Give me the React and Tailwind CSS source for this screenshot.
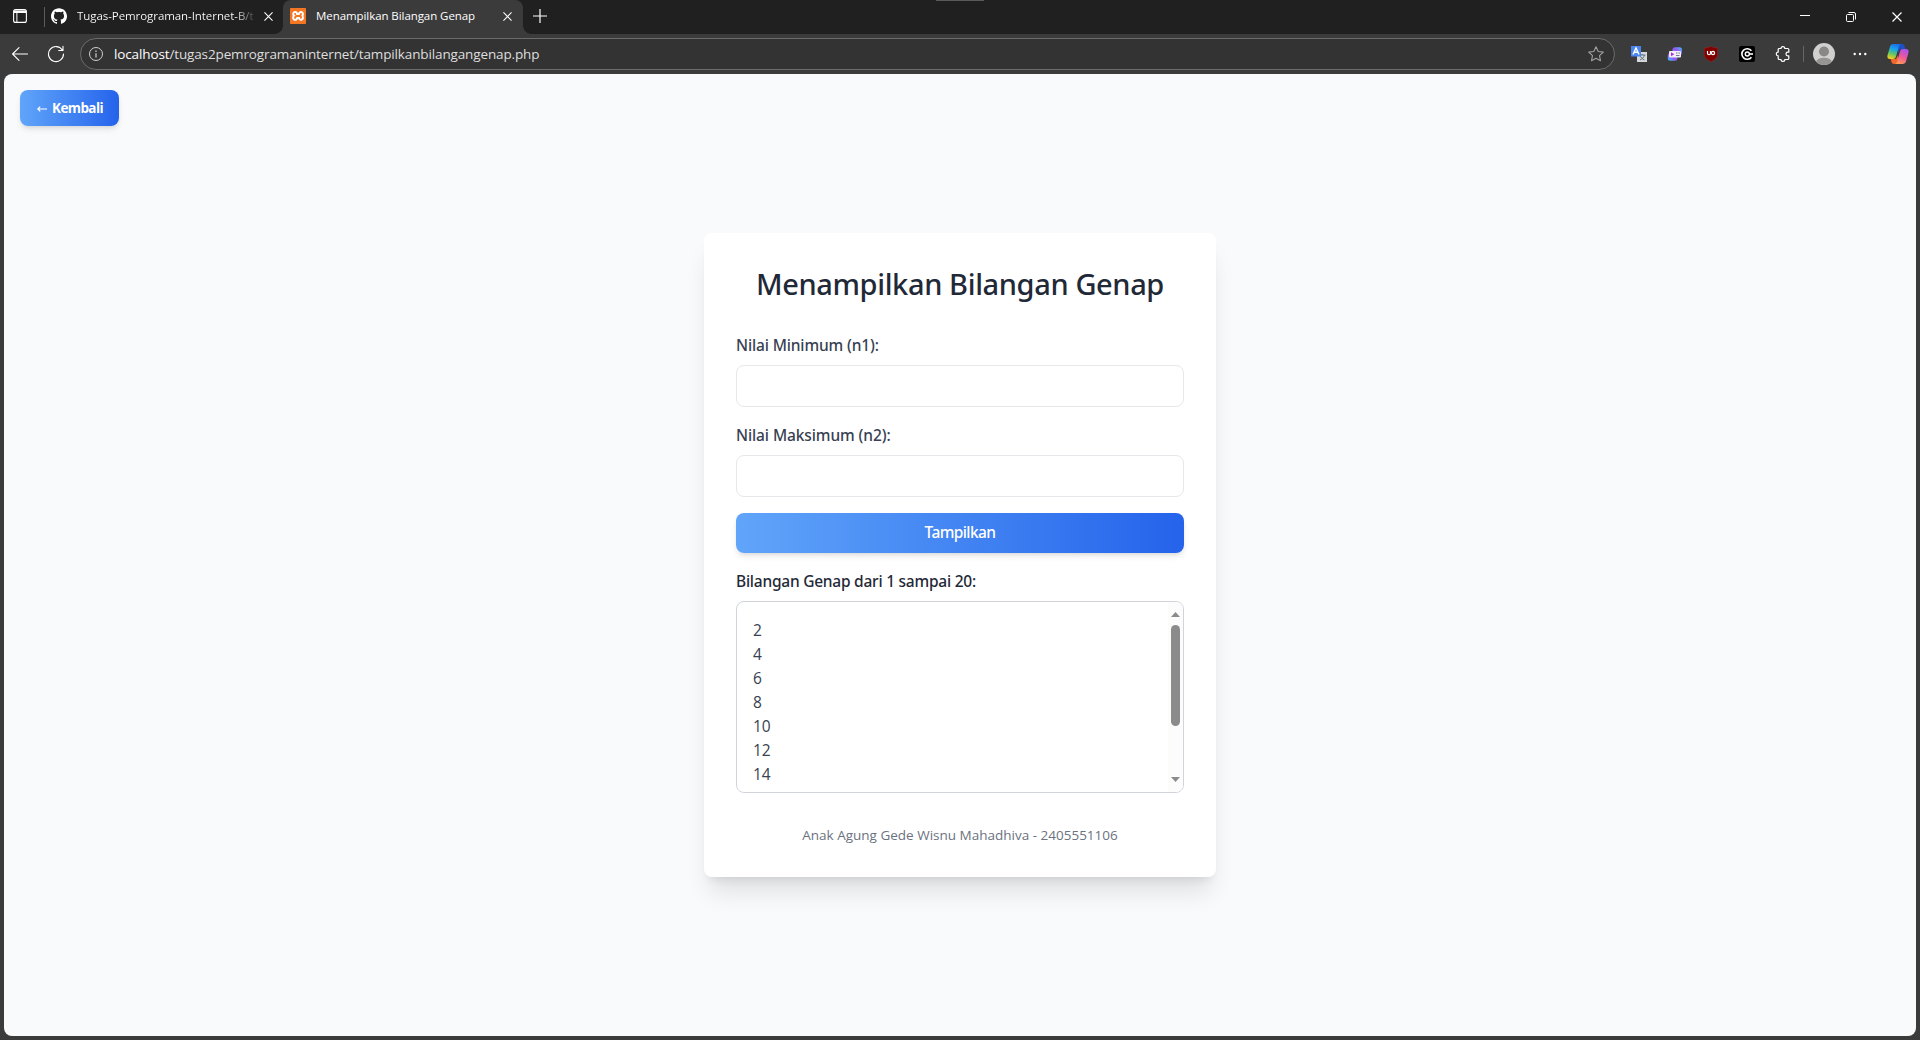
import { SiXampp, SiGithub } from "react-icons/si";

const numbers = [2, 4, 6, 8, 10, 12, 14];

function CloseIcon({ size = 10, className = "" }) {
  return (
    <svg width={size} height={size} viewBox="0 0 10 10" className={className} fill="none" stroke="currentColor" strokeWidth="1.2">
      <path d="M.5.5l9 9M9.5.5l-9 9" />
    </svg>
  );
}

function TitleBar() {
  return (
    <div className="relative flex h-[34px] bg-[#202020] text-white">
      <div className="absolute left-[936px] top-0 h-px w-12 bg-[#5a5a5a]" />
      <div className="flex w-11 items-center pl-[13px]">
        <svg width="14" height="14" viewBox="0 0 14 14" fill="none" stroke="currentColor" strokeWidth="1.1" className="mt-[-2px]">
          <rect x=".6" y=".6" width="12.8" height="12.8" rx="2" />
          <path d="M1 2.2h12M1 3.3h12" strokeWidth="1.3" />
          <path d="M3.9 3v10.4" strokeWidth="1" />
        </svg>
      </div>
      <div className="mt-[7px] h-5 w-px bg-[#5c5c5c]" />
      <div className="flex h-8 w-[238px] items-center pl-1.5">
        <SiGithub size={16} />
        <span className="ml-[10px] w-[180px] overflow-hidden whitespace-nowrap bg-linear-to-r from-white from-88% to-transparent bg-clip-text text-[11.5px] tracking-[-0.07px] text-transparent">
          Tugas-Pemrograman-Internet-B/t
        </span>
        <CloseIcon size={9} className="ml-[7px] mt-px" />
      </div>
      <div className="relative flex h-[34px] w-[240px] items-start rounded-t-lg bg-[#3b3b3b]">
        <div className="absolute -left-2 bottom-0 h-2 w-2 bg-[radial-gradient(circle_at_0_0,#202020_7.5px,#3b3b3b_8px)]" />
        <div className="absolute -right-2 bottom-0 h-2 w-2 bg-[radial-gradient(circle_at_100%_0,#202020_7.5px,#3b3b3b_8px)]" />
        <div className="flex h-8 w-full items-center pl-[7px]">
          <div className="flex h-4 w-4 items-center justify-center overflow-hidden rounded-[1px] bg-[#f37623]">
            <div className="flex h-3 w-3 items-center justify-center bg-white">
              <SiXampp size={16} className="shrink-0 text-[#f37623]" />
            </div>
          </div>
          <span className="ml-[10px] w-[187px] whitespace-nowrap text-[11.5px] tracking-[-0.07px]">Menampilkan Bilangan Genap</span>
          <CloseIcon size={9} className="mt-px" />
        </div>
      </div>
      <svg width="14" height="14" viewBox="0 0 14 14" fill="none" stroke="currentColor" strokeWidth="1.2" className="ml-[10px] mt-[9px]">
        <path d="M7 0v14M0 7h14" />
      </svg>
      <div className="ml-auto flex h-8 items-center pr-[18px]">
        <svg width="10" height="10" viewBox="0 0 10 10" className="mr-[36px]"><path d="M0 4.500h10" stroke="currentColor" /></svg>
        <svg width="10" height="10" viewBox="0 0 10 10" fill="none" stroke="currentColor" className="mr-[36px] mt-px">
          <rect x=".5" y="2.500" width="7" height="7" rx="1" />
          <path d="M2.500.5H8A1.500 1.500 0 0 1 9.500 2v5.500" />
        </svg>
        <CloseIcon size={10} className="mt-px" />
      </div>
    </div>
  );
}

function TranslateIcon() {
  return (
    <svg width="16" height="16" viewBox="0 0 16 16">
      <rect x="6" y="6" width="10" height="10" fill="#d5d9dc" />
      <path d="M8 9h6.500M11 8v1M9 9c.5 2.500 2.500 4 4.500 5M13.500 9c-.5 2.500-2.500 4-4.500 5" stroke="#60727d" fill="none" />
      <path d="M0 0h10v10.500H0z" fill="#4a86f0" />
      <path d="M2 8.500l3-6.500L8 8.500M3.300 6.300h3.500" stroke="#fff" strokeWidth="1.400" fill="none" />
    </svg>
  );
}

function VideoIcon() {
  return (
    <svg width="16" height="14" viewBox="0 0 16 14">
      <defs>
        <linearGradient id="vid" x1="0" y1="1" x2="1" y2="0">
          <stop offset="0" stopColor="#21d4fd" />
          <stop offset=".5" stopColor="#a04df5" />
          <stop offset="1" stopColor="#35c8f5" />
        </linearGradient>
      </defs>
      <rect x="5.500" y=".3" width="9.500" height="8" rx="2.500" fill="url(#vid)" />
      <rect x=".8" y="6" width="9.500" height="7.800" rx="2.500" fill="url(#vid)" />
      <rect x="2" y="4" width="12" height="6.500" rx="1" fill="#f1eef9" />
      <path d="M4 5.300l3.300 2L4 9.300z" fill="#b32be8" />
      <path d="M9 6h1.500M11.500 6H13M9 8.500h3.500" stroke="#7b7790" strokeWidth="1.200" />
    </svg>
  );
}

function ShieldIcon() {
  return (
    <svg width="14" height="16" viewBox="0 0 14 16">
      <path d="M7 .3c2 1.300 4.300 1.700 6.700 1.700v6.500c0 3.300-3 5.400-6.700 7.200C3.300 13.900.3 11.800.3 8.500V2C2.700 2 5 1.600 7 .3z" fill="#800000" stroke="#a33" strokeWidth=".4" />
      <path d="M3.500 5v2.200a1.500 1.500 0 0 0 3 0V5" fill="none" stroke="#fff" strokeWidth="1.200" />
      <circle cx="9" cy="7" r="1.600" fill="none" stroke="#fff" strokeWidth="1.200" />
    </svg>
  );
}

function CopyIcon() {
  return (
    <svg width="16" height="16" viewBox="0 0 16 16" fill="none" stroke="#fff" strokeWidth="1.600">
      <rect width="16" height="16" rx="2" fill="#000" stroke="none" />
      <path d="M12.400 4.800A5.300 5.300 0 1 0 12.400 11.200" />
      <path d="M14 8h-3.500" />
      <circle cx="8.300" cy="8" r="2" strokeWidth="1.400" />
    </svg>
  );
}

function PuzzleIcon() {
  return (
    <svg width="16" height="16" viewBox="0 0 16 16" fill="none" stroke="#fff" strokeWidth="1.200" strokeLinejoin="round">
      <path d="M6 2.500a1.900 1.900 0 0 1 3.800 0h3a1 1 0 0 1 1 1v2.700h-1a1.800 1.800 0 0 0 0 3.600h1v2.700a1 1 0 0 1-1 1h-3a1.900 1.900 0 0 1-3.800 0H4.200a1 1 0 0 1-1-1V9.900a1.900 1.900 0 0 1 0-3.800V3.500a1 1 0 0 1 1-1z" />
    </svg>
  );
}

function CopilotIcon() {
  return (
    <svg width="22" height="22" viewBox="0 0 22 22">
      <defs>
        <linearGradient id="cpa" x1=".6" y1="0" x2=".3" y2="1">
          <stop offset="0" stopColor="#1b6fe8" />
          <stop offset=".35" stopColor="#1aa5e8" />
          <stop offset=".65" stopColor="#5bc46b" />
          <stop offset="1" stopColor="#f6cf1c" />
        </linearGradient>
        <linearGradient id="cpb" x1=".7" y1="0" x2=".3" y2="1">
          <stop offset="0" stopColor="#a955ea" />
          <stop offset=".5" stopColor="#f0569a" />
          <stop offset="1" stopColor="#ff9a55" />
        </linearGradient>
      </defs>
      <path d="M11 1h4c1.400 0 2.100.8 2.500 2l.9 3h-5.400l-2 4z" fill="#1b50c8" />
      <path d="M11 21H7c-1.400 0-2.100-.8-2.500-2l-.9-3H9l2-4z" fill="#f0662b" />
      <path d="M6.300 1H14c-1.200.3-1.700 1.300-2.100 2.600L9 13.500C8.500 15.200 7.600 16 6 16H3C.8 16 0 14.400.5 12.300L3 3.800C3.500 2 4.500 1 6.300 1z" fill="url(#cpa)" />
      <path d="M15.700 21H8c1.200-.3 1.700-1.300 2.100-2.600L13 8.500C13.500 6.800 14.400 6 16 6h3c2.200 0 3 1.600 2.500 3.700L19 18.200c-.5 1.800-1.500 2.800-3.300 2.800z" fill="url(#cpb)" />
    </svg>
  );
}

function Toolbar() {
  return (
    <div className="flex h-10 items-center bg-[#3b3b3b] text-white">
      <svg width="16" height="14" viewBox="0 0 16 14" fill="none" stroke="currentColor" strokeWidth="1.1" className="ml-3" strokeLinecap="round" strokeLinejoin="round">
        <path d="M15.500 7H.6M7 .7L.6 7 7 13.300" />
      </svg>
      <svg width="18" height="18" viewBox="0 0 18 18" fill="none" stroke="currentColor" strokeWidth="1.1" className="ml-[19px]" strokeLinecap="round" strokeLinejoin="round">
        <path d="M15.300 5A7.500 7.500 0 1 0 16.500 9M16 1.300V5.500H11.700" />
      </svg>
      <div className="ml-[15px] flex h-8 w-[1535px] items-center rounded-full border border-[#6b6b6b] bg-[#333333] pl-2 pr-[10px]">
        <svg width="14" height="14" viewBox="0 0 14 14" fill="none" stroke="#d0d0d0" strokeWidth="1">
          <circle cx="7" cy="7" r="6.500" />
          <path d="M7 6.200v4.300M7 3.500v1.400" strokeWidth="1.200" />
        </svg>
        <span className="ml-[11px] whitespace-nowrap text-[13.5px] tracking-[-0.13px] text-[#dedede]">
          <span className="text-white">localhost</span>/tugas2pemrogramaninternet/tampilkanbilangangenap.php
        </span>
        <svg width="16" height="16" viewBox="0 0 16 16" fill="none" stroke="#a0a0a0" strokeWidth="1.1" strokeLinejoin="round" className="ml-auto">
          <path d="M8 .8l2.200 4.700 5.100.6-3.800 3.500 1 5.100L8 12.200l-4.500 2.500 1-5.100L.7 6.100l5.100-.6z" />
        </svg>
      </div>
      <div className="flex w-[305px] items-center pl-4">
        <TranslateIcon />
        <div className="ml-5"><VideoIcon /></div>
        <div className="ml-[21px]"><ShieldIcon /></div>
        <div className="ml-[21px]"><CopyIcon /></div>
        <div className="ml-5"><PuzzleIcon /></div>
        <div className="ml-3 h-4 w-px bg-[#666666]" />
        <svg width="22" height="22" viewBox="0 0 22 22" className="ml-[9px]">
          <defs><clipPath id="av"><circle cx="11" cy="11" r="11" /></clipPath></defs>
          <g clipPath="url(#av)">
            <rect width="22" height="22" fill="#d2d0ce" />
            <circle cx="11" cy="8.500" r="5" fill="#8a8886" />
            <ellipse cx="11" cy="19.500" rx="8" ry="4.800" fill="#979593" />
          </g>
        </svg>
        <svg width="14" height="4" viewBox="0 0 14 4" fill="currentColor" className="ml-[18px]">
          <circle cx="1.700" cy="2" r="1.200" /><circle cx="7" cy="2" r="1.200" /><circle cx="12.300" cy="2" r="1.200" />
        </svg>
        <div className="ml-5"><CopilotIcon /></div>
      </div>
    </div>
  );
}

function Field({ label, tracking }) {
  return (
    <div className="mb-4">
      <label className={"mb-2 block text-[15.5px] leading-6 font-medium font-['Noto_Sans',sans-serif] text-[#374151] " + tracking}>{label}</label>
      <input className="block h-[42px] w-full rounded-lg border border-[#e5e7eb] bg-white px-3" />
    </div>
  );
}

function NumberList() {
  return (
    <div className="flex h-48 overflow-hidden rounded-lg border border-[#d1d5db]">
      <div className="flex-1 overflow-hidden p-4 text-[15.5px] leading-6 tracking-[-0.1px] text-[#374151]">
        {numbers.map((n) => <div key={n}>{n}</div>)}
      </div>
      <div className="flex w-[15px] flex-col items-center bg-[#fcfcfc] pt-2.5 pb-2.5">
        <svg width="9" height="5" viewBox="0 0 9 5" fill="#8b8b8b"><path d="M4.500 0L9 5H0z" /></svg>
        <div className="mt-2 h-[101px] w-[9px] rounded-full bg-[#8b8b8b]" />
        <svg width="9" height="5" viewBox="0 0 9 5" fill="#8b8b8b" className="mt-auto"><path d="M4.500 5L9 0H0z" /></svg>
      </div>
    </div>
  );
}

export default function App() {
  return (
    <div className="flex h-[1040px] w-[1920px] flex-col overflow-hidden bg-[#3b3b3b] font-['Open_Sans',sans-serif]">
      <TitleBar />
      <Toolbar />
      <main className="relative mx-1 mb-1 flex flex-1 items-center justify-center overflow-hidden rounded-lg bg-[#f9fafc]">
        <button className="absolute left-4 top-4 flex h-9 w-[99px] items-center justify-center rounded-lg bg-linear-to-r/srgb from-[#60a5fa] to-[#2563eb] pl-px text-white shadow-md">
          <svg width="10" height="6" viewBox="0 0 10 6" fill="none" stroke="currentColor" strokeWidth="1.1" className="mt-px"><path d="M10 3H.8M3.200.6L.8 3l2.400 2.400" /></svg>
          <span className="ml-[5px] text-[13.5px] font-bold tracking-[-0.6px]">Kembali</span>
        </button>
        <section className="w-[512px] rounded-lg bg-white p-8 shadow-xl">
          <h1 className="mb-[31px] pt-px text-center font-['Noto_Sans',sans-serif] text-[29px] leading-9 font-medium tracking-[-0.38px] text-[#1f2937]">
            Menampilkan Bilangan Genap
          </h1>
          <Field label="Nilai Minimum (n1):" tracking="tracking-[-0.14px]" />
          <Field label="Nilai Maksimum (n2):" tracking="tracking-[-0.1px]" />
          <button className="block h-10 w-full rounded-lg bg-linear-to-r/srgb from-[#60a5fa] to-[#2563eb] font-['Noto_Sans',sans-serif] text-[15.5px] font-medium tracking-[-0.6px] text-white shadow-md">
            Tampilkan
          </button>
          <h2 className="mt-4 mb-2 font-['Noto_Sans',sans-serif] text-[15.5px] leading-6 font-medium tracking-[-0.24px] text-[#1f2937]">
            Bilangan Genap dari 1 sampai 20:
          </h2>
          <NumberList />
          <p className="mt-8 text-center text-[13.5px] leading-5 text-[#6b7280]">Anak Agung Gede Wisnu Mahadhiva - 2405551106</p>
        </section>
      </main>
    </div>
  );
}
